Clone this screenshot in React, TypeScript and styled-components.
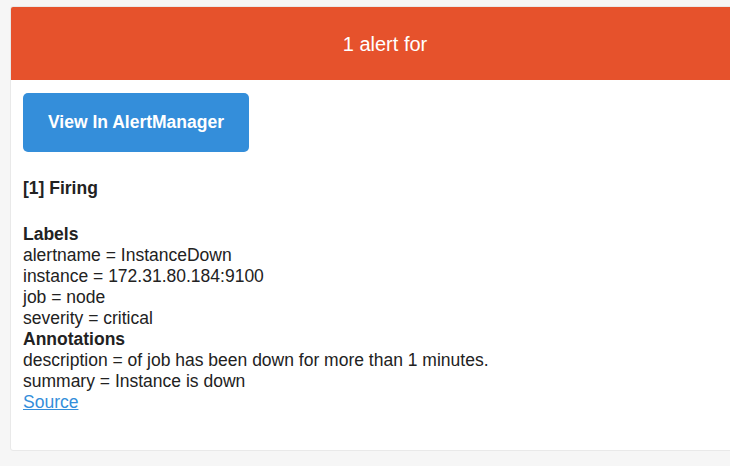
import React from "react";
import styled, { createGlobalStyle } from "styled-components";

const GlobalStyle = createGlobalStyle`
  html, body {
    margin: 0;
    padding: 0;
    background: #f6f6f6;
    overflow: hidden;
  }
  body {
    font-family: "Liberation Sans", Arial, Helvetica, sans-serif;
    font-size: 17.5px;
    line-height: 21px;
    color: #222;
  }
`;

const labels = [
  ["alertname", "InstanceDown"],
  ["instance", "172.31.80.184:9100"],
  ["job", "node"],
  ["severity", "critical"],
];

const annotations = [
  ["description", "of job has been down for more than 1 minutes."],
  ["summary", "Instance is down"],
];

const App: React.FC = () => {
  return (
    <>
      <GlobalStyle />
      <Page>
        <Container>
          {/* 헤더 */}
          <Alert>1 alert for</Alert>

          <Content>
            <Button href="#">View In AlertManager</Button>

            <Status>[1] Firing</Status>

            <Block>
              <Heading>Labels</Heading>
              {labels.map(([k, v]) => (
                <Row key={`label-${k}`}>
                  {k} = {v}
                </Row>
              ))}
              <Heading>Annotations</Heading>
              {annotations.map(([k, v]) => (
                <Row key={`anno-${k}`}>
                  {k} = {v}
                </Row>
              ))}
              <SourceLink href="#">Source</SourceLink>
            </Block>
          </Content>
        </Container>
      </Page>
    </>
  );
};

const Page = styled.div`
  padding: 6px 0 0 10px;
  height: 466px;
  box-sizing: border-box;
`;

const Container = styled.div`
  width: 750px;
  height: 445px;
  box-sizing: border-box;
  background: #fff;
  border: 1px solid #e9e9e9;
  border-radius: 3px;
  overflow: hidden;
`;

const Alert = styled.div`
  background: #e6522c;
  color: #fff;
  font-size: 20px;
  line-height: 24px;
  text-align: center;
  padding: 25px 0 24px;
`;

const Content = styled.div`
  padding: 13px 12px 0;
`;

const Button = styled.a`
  display: flex;
  align-items: center;
  justify-content: center;
  width: 226px;
  height: 59px;
  background: #348eda;
  border-radius: 5px;
  color: #fff;
  font-weight: bold;
  font-size: 17.5px;
  text-decoration: none;
`;

const Status = styled.div`
  margin-top: 26px;
  font-weight: bold;
`;

const Block = styled.div`
  margin-top: 25px;
`;

const Heading = styled.div`
  font-weight: bold;
`;

const Row = styled.div``;

const SourceLink = styled.a`
  color: #348eda;
  text-decoration: underline;
`;

export default App;
